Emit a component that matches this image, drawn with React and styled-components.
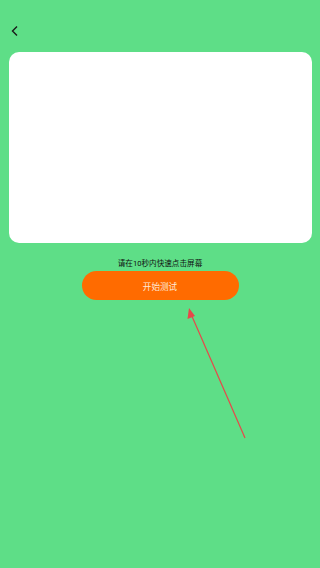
import styled, { createGlobalStyle } from "styled-components";

const Global = createGlobalStyle`
  html, body { margin: 0; padding: 0; }
  body {
    background: #5ede87;
    font-family: Roboto, "Noto Sans CJK SC", sans-serif;
  }
`;

export default function App() {
  return (
    <>
      <Global />
      <Page>
        <TopBar>
          <BackBtn>
            <svg width="10" height="12" viewBox="0 0 10 12">
              <path d="M7 1.5 L2.5 6 L7 10.5" fill="none" stroke="#1a1a1a" strokeWidth="1.4" />
            </svg>
          </BackBtn>
        </TopBar>
        <Card />
        <Hint>请在10秒内快速点击屏幕</Hint>
        <StartBtn>开始测试</StartBtn>
        <Arrow width="320" height="568" viewBox="0 0 320 568">
          <line x1="245" y1="438" x2="191" y2="314" stroke="#e8474a" strokeWidth="1.2" />
          <polygon points="189,308 187.5,319 195,316" fill="#e8474a" />
        </Arrow>
      </Page>
    </>
  );
}

const Page = styled.div`
  position: relative;
  width: 320px;
  height: 568px;
  display: flex;
  flex-direction: column;
  align-items: center;
  overflow: hidden;
`;

const TopBar = styled.div`
  width: 100%;
  height: 52px;
  display: flex;
  align-items: center;
  padding: 0 0 0 10px;
  box-sizing: border-box;
`;

const BackBtn = styled.div`
  width: 10px;
  height: 12px;
  margin-top: 10px;
  display: flex;
`;

const Card = styled.div`
  width: 303px;
  height: 191px;
  background: #fff;
  border-radius: 10px;
`;

const Hint = styled.div`
  margin-top: 16px;
  font-size: 7.6px;
  line-height: 10px;
  color: #111;
`;

const StartBtn = styled.div`
  margin-top: 2px;
  width: 157px;
  height: 29px;
  border-radius: 15px;
  background: #ff6b00;
  color: #fde9d8;
  font-size: 8.6px;
  display: flex;
  align-items: center;
  justify-content: center;
`;

const Arrow = styled.svg`
  position: absolute;
  left: 0;
  top: 0;
  pointer-events: none;
`;
